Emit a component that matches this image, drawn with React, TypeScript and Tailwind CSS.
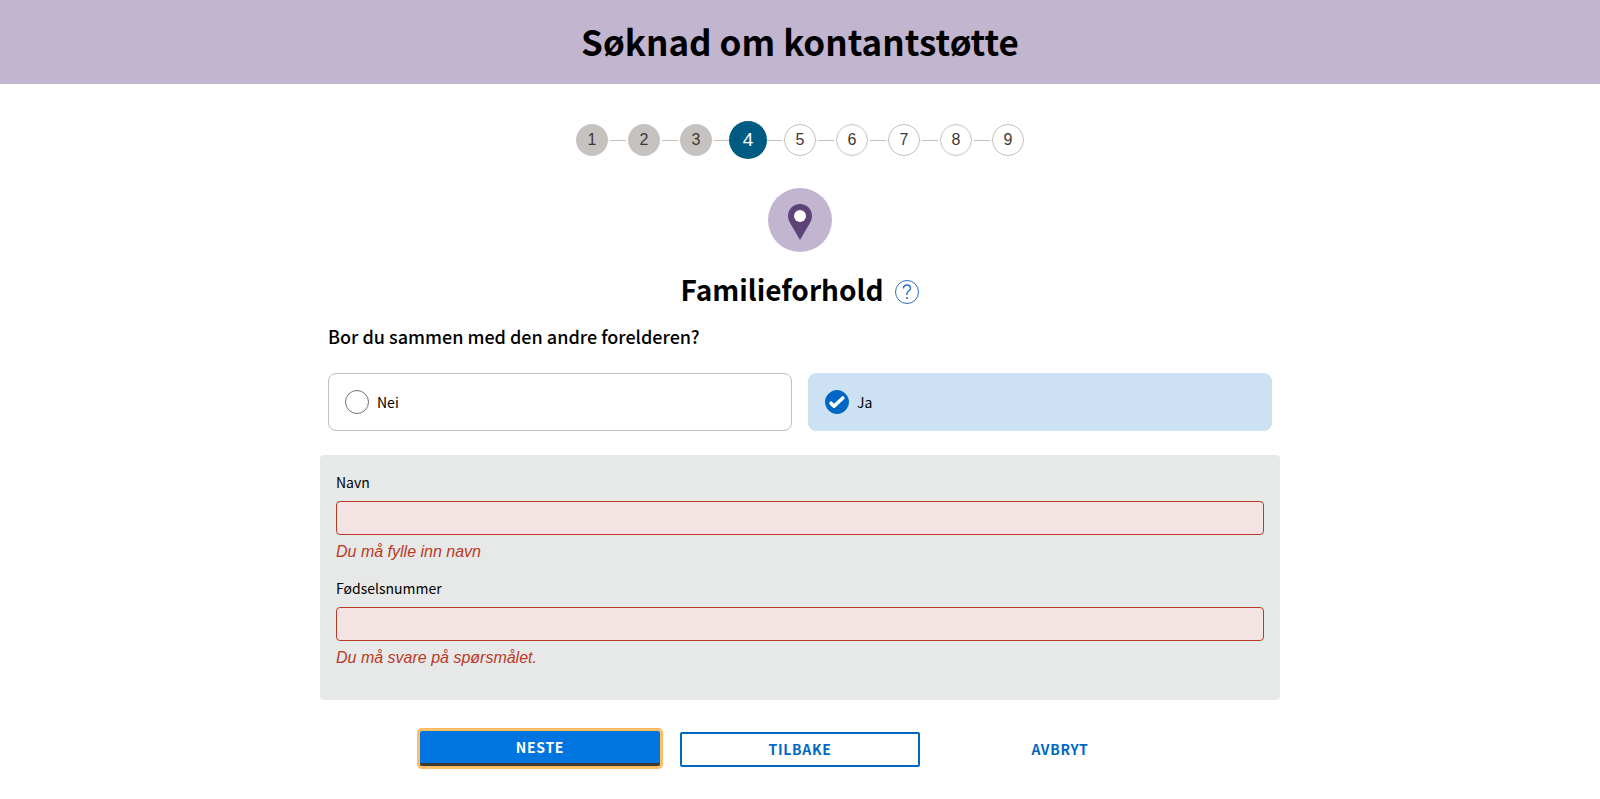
import { useState } from 'react';

const steps = [1, 2, 3, 4, 5, 6, 7, 8, 9];
const currentStep = 4;

function stepClass(step: number) {
  if (step === currentStep) {
    return '-mx-[3px] size-[38px] bg-[#005b82] text-[19px] text-white';
  }
  if (step < currentStep) {
    return 'size-8 bg-[#c6c2bf] text-base text-[#3e3832]';
  }
  return 'size-8 border border-[#c6c2bf] bg-white text-base text-[#3e3832]';
}

function Stepper() {
  return (
    <nav aria-label="Steg" className="flex h-[38px] items-center justify-center font-['Liberation_Sans',sans-serif]">
      {steps.map((step) => (
        <div key={step} className="flex items-center">
          {step > 1 && (
            <div className="flex w-5 justify-center">
              <div className="h-px w-4 bg-[#c6c2bf]" />
            </div>
          )}
          <button
            type="button"
            aria-current={step === currentStep ? 'step' : undefined}
            className={`z-10 flex items-center justify-center rounded-full leading-5 ${stepClass(step)}`}
          >
            {step}
          </button>
        </div>
      ))}
    </nav>
  );
}

function PinIcon() {
  return (
    <svg viewBox="0 0 64 64" className="size-16" aria-hidden="true">
      <circle cx="32" cy="32" r="32" fill="#c1b5d0" />
      <path d="M32 16c-6.700 0-12 5.300-12 12 0 2.300.7 4.300 1.700 6.200L32 52l10.300-17.800c1-1.900 1.700-3.900 1.700-6.200 0-6.700-5.300-12-12-12z" fill="#5c4378" />
      <circle cx="32" cy="28" r="6" fill="#fff" />
    </svg>
  );
}

function HelpIcon() {
  return (
    <svg viewBox="0 0 24 24" className="size-6" fill="none" stroke="#2a6ebb" aria-hidden="true">
      <circle cx="12" cy="12" r="11.500" />
      <path d="M8.500 8.500c0-2 1.500-3.500 3.500-3.500s3.500 1.400 3.500 3.200c0 2.700-3.500 2.800-3.500 5.300v1.500" strokeWidth="1.400" />
      <circle cx="12" cy="18" r="1.100" fill="#2a6ebb" stroke="none" />
    </svg>
  );
}

interface RadioCardProps {
  label: string;
  checked: boolean;
  onSelect: () => void;
}

function RadioCard({ label, checked, onSelect }: RadioCardProps) {
  return (
    <label
      className={`flex h-[58px] cursor-pointer items-center gap-2 rounded-lg border px-4 text-sm leading-6 ${
        checked ? 'border-[#cce1f3] bg-[#cce1f3]' : 'border-[#c0c0c0] bg-white'
      }`}
    >
      <span className="grid size-6 place-items-center">
        <input
          type="radio"
          name="samboer"
          checked={checked}
          onChange={onSelect}
          className={`col-start-1 row-start-1 size-6 appearance-none rounded-full border ${
            checked ? 'border-[#0067c5] bg-[#0067c5]' : 'border-[#78706a] bg-white'
          }`}
        />
        {checked && (
          <svg viewBox="0 0 24 24" className="pointer-events-none z-10 col-start-1 row-start-1 size-6" fill="none" aria-hidden="true">
            <path d="M6 13.200l3 3L17.800 8" stroke="#fff" strokeWidth="3.600" strokeLinecap="round" strokeLinejoin="round" />
          </svg>
        )}
      </span>
      <span>{label}</span>
    </label>
  );
}

interface TextFieldProps {
  id: string;
  label: string;
  error: string;
}

function TextField({ id, label, error }: TextFieldProps) {
  return (
    <div className="flex flex-col items-start">
      <label htmlFor={id} className="mb-2 text-sm leading-[22px]">
        {label}
      </label>
      <input
        id={id}
        type="text"
        aria-invalid="true"
        aria-describedby={`${id}-feil`}
        className="h-[34px] w-full rounded border border-[#ba3a26] bg-[#f3e3e3] px-2 text-sm"
      />
      <p id={`${id}-feil`} className="mt-[5px] font-['Liberation_Sans',sans-serif] text-base leading-6 text-[#ba3a26] italic">
        {error}
      </p>
    </div>
  );
}

export default function App() {
  const [answer, setAnswer] = useState('Ja');

  return (
    <div className="bg-white pb-8 font-['Noto_Sans_CJK_JP',sans-serif] text-black">
      <header className="flex h-[84px] items-center justify-center bg-[#c1b5d0] pb-0.5">
        <h1 className="text-[35px] leading-[44px] font-bold">Søknad om kontantstøtte</h1>
      </header>
      <main className="mx-auto max-w-[960px] pt-[37px]">
        <Stepper />
        <div className="mt-[29px] flex justify-center">
          <PinIcon />
        </div>
        <div className="mt-[19px] flex items-center justify-center gap-3">
          <h2 className="text-[28px] leading-9 font-bold">Familieforhold</h2>
          <button type="button" aria-label="Hjelp" className="mt-1.5">
            <HelpIcon />
          </button>
        </div>
        <form onSubmit={(event) => event.preventDefault()}>
          <fieldset className="mt-[15px] px-2">
            <legend className="text-lg leading-7 font-medium">Bor du sammen med den andre forelderen?</legend>
            <div className="mt-[23px] grid grid-cols-2 gap-4">
              {['Nei', 'Ja'].map((option) => (
                <RadioCard key={option} label={option} checked={answer === option} onSelect={() => setAnswer(option)} />
              ))}
            </div>
          </fieldset>
          <section className="mt-6 flex flex-col gap-[13px] rounded bg-[#e7e9e8] px-4 pt-4 pb-[30px]">
            <TextField id="navn" label="Navn" error="Du må fylle inn navn" />
            <TextField id="fodselsnummer" label="Fødselsnummer" error="Du må svare på spørsmålet." />
          </section>
          <div className="mt-8 flex justify-center gap-5 text-sm leading-5 font-bold tracking-wider">
            <button
              type="submit"
              className="-mt-px h-[35px] w-60 rounded-xs border-b-3 border-[#3e3832] bg-[#0074df] text-white uppercase ring-3 ring-[#ffbd66]"
            >
              Neste
            </button>
            <button type="button" className="h-[35px] w-60 rounded-xs border-2 border-[#0067c5] pb-0.5 text-[#0067c5] uppercase">
              Tilbake
            </button>
            <button type="button" className="h-[35px] w-60 pb-0.5 text-[#0067c5] uppercase">
              Avbryt
            </button>
          </div>
        </form>
      </main>
    </div>
  );
}
